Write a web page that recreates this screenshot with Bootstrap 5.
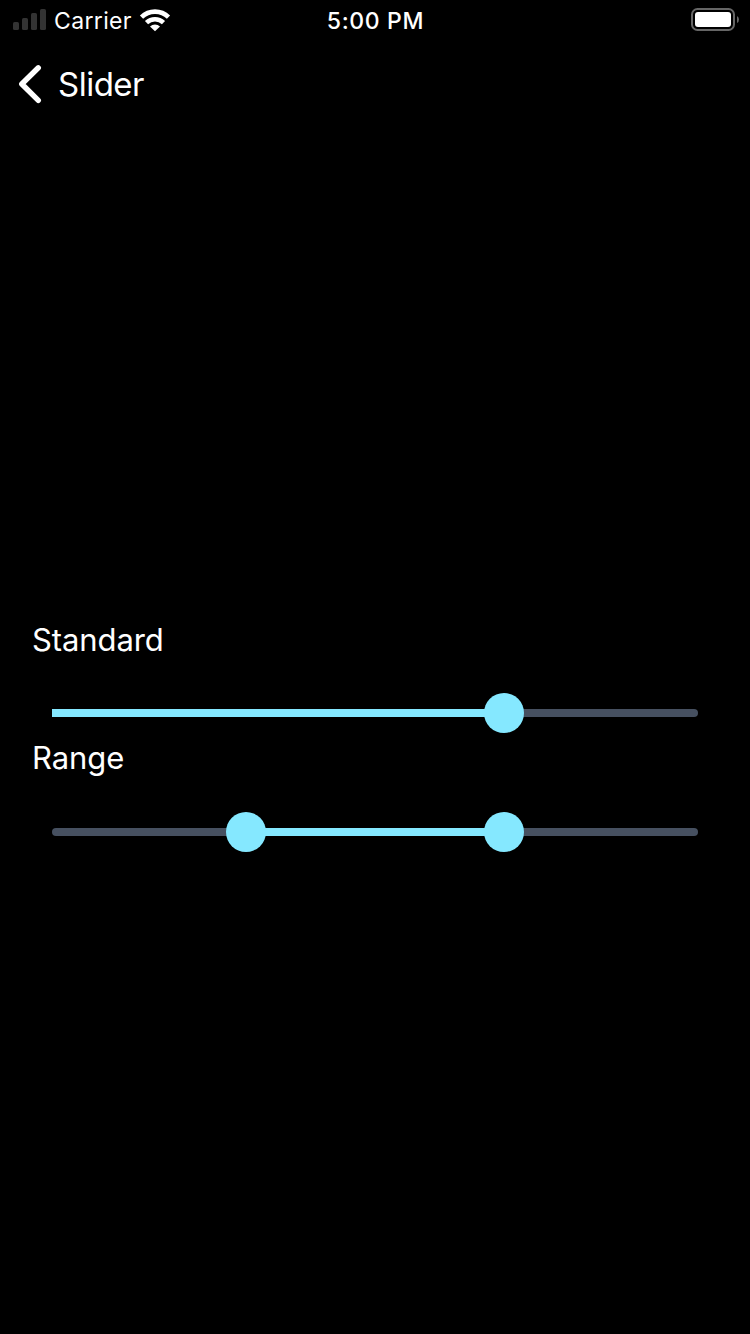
<!DOCTYPE html>
<html lang="en" data-bs-theme="dark">
<head>
<meta charset="utf-8">
<meta name="viewport" content="width=device-width, initial-scale=1">
<title>Slider</title>
<link href="https://cdn.jsdelivr.net/npm/bootstrap@5.3.0/dist/css/bootstrap.min.css" rel="stylesheet">
<style>
  body { background: #000; color: #fff; font-family: Inter, "Liberation Sans", sans-serif; }
  .status-bar { height: 40px; font-size: 24px; line-height: 40px; }
  .status-side { flex: 1 1 0; }
  .carrier { margin-left: 8px; padding-top: 2px; font-size: 23px; letter-spacing: .35px; }
  .clock { padding: 2px 0 0 1px; font-size: 23px; font-weight: 550; letter-spacing: .65px; }
  .wifi { margin-left: 7.5px; }
  .title-bar { height: 88px; padding-left: 18px; }
  .title-text { font-size: 33px; line-height: 40px; margin-left: 16px; letter-spacing: -.5px; font-weight: 400; }
  .demo { padding: 16px 32px 0; }
  .slider-label { font-size: 31px; line-height: 39px; height: 40px; letter-spacing: -.1px; }
  .slider-label-range { line-height: 37px; }
  .slider-row { padding: 33px 20px 6px; }
  .slider { height: 40px; }
  .track { height: 8px; border-radius: 4px; background: #465060; }
  .fill { height: 8px; background: #85e8ff; }
  .thumb { width: 40px; height: 40px; background: #85e8ff; }
</style>
</head>
<body>
<div class="d-flex flex-column vh-100 overflow-hidden">
  <header class="status-bar d-flex align-items-center">
    <div class="status-side d-flex align-items-center">
      <svg class="ms-2 flex-shrink-0" width="38" height="40" fill="#333"><rect x="5" y="22" width="6" height="8" rx="1.6"/><rect x="14" y="18" width="6" height="12" rx="1.6"/><rect x="23" y="13" width="6" height="17" rx="1.6"/><rect x="32" y="9" width="6" height="21" rx="1.6"/></svg>
      <span class="carrier">Carrier</span>
      <svg class="wifi" width="32" height="40" viewBox="0 0 32 40" fill="none" stroke="#fff" stroke-width="4.6"><path d="M2.500 17.200a19.200 19.200 0 0 1 27 0M7.500 22.600a12.400 12.400 0 0 1 17 0"/><path d="M11 26.600a7.200 7.200 0 0 1 10 0L16 31.300z" fill="#fff" stroke="none"/></svg>
    </div>
    <div class="clock">5:00 PM</div>
    <div class="status-side d-flex justify-content-end">
      <svg width="60" height="40" fill="none"><rect x="2" y="9" width="42" height="21" rx="5.5" stroke="#666" stroke-width="2"/><rect x="5" y="12" width="36" height="15" rx="3" fill="#fff"/><path d="M47 16q2 1 2 3.500T47 23z" fill="#666"/></svg>
    </div>
  </header>
  <nav class="title-bar d-flex align-items-center">
    <svg width="24" height="40" fill="none" stroke="#fff" stroke-width="5.4" stroke-linecap="round" stroke-linejoin="round"><path d="M20.300 3.800 3.800 20l16.500 16.300"/></svg>
    <h1 class="title-text mb-0">Slider</h1>
  </nav>
  <main class="demo flex-grow-1 d-flex flex-column justify-content-center">
    <section>
      <div class="slider-label">Standard</div>
      <div class="slider-row">
        <div class="slider position-relative d-flex align-items-center">
          <div class="track w-100"><div class="fill" style="width:70%"></div></div>
          <div class="thumb rounded-circle position-absolute top-50 translate-middle" style="left:70%"></div>
        </div>
      </div>
    </section>
    <section>
      <div class="slider-label slider-label-range">Range</div>
      <div class="slider-row">
        <div class="slider position-relative d-flex align-items-center">
          <div class="track w-100"><div class="fill" style="margin-left:30%;width:40%"></div></div>
          <div class="thumb rounded-circle position-absolute top-50 translate-middle" style="left:30%"></div>
          <div class="thumb rounded-circle position-absolute top-50 translate-middle" style="left:70%"></div>
        </div>
      </div>
    </section>
  </main>
</div>
<script src="https://cdn.jsdelivr.net/npm/bootstrap@5.3.0/dist/js/bootstrap.bundle.min.js"></script>
</body>
</html>
